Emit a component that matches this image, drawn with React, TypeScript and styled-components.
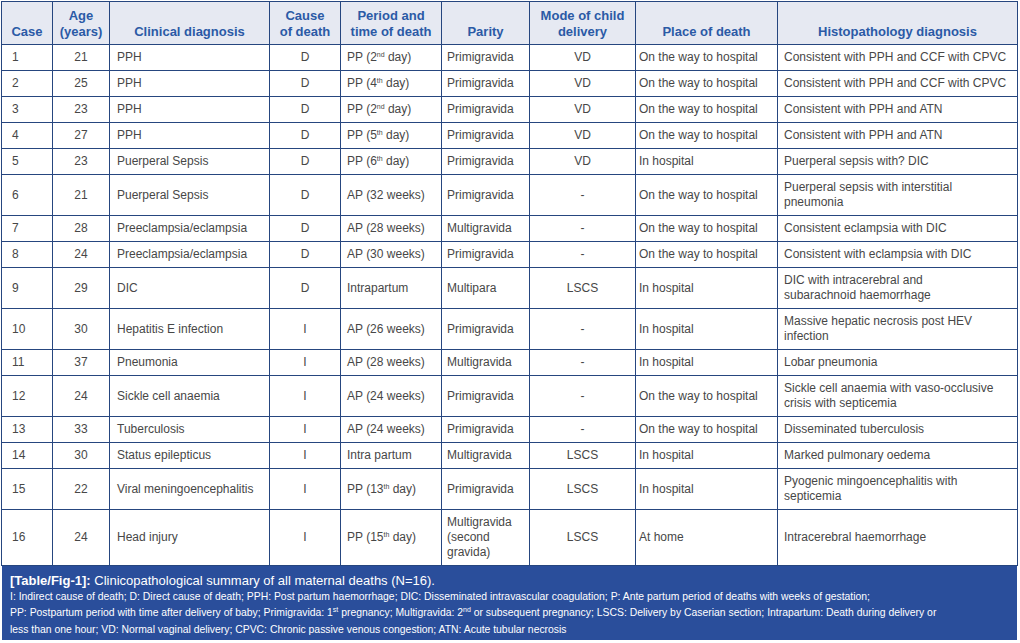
import React from 'react';
import styled, { createGlobalStyle } from 'styled-components';

const Global = createGlobalStyle`
  html, body { margin: 0; padding: 0; background: #fff; }
  body { font-family: "Liberation Sans", Arial, sans-serif; }
`;

type Align = 'left' | 'center';

interface Row {
  c: React.ReactNode[];
}

const Ord = ({ n, s }: { n: string; s: string }) => (
  <>
    {n}
    <Sup>{s}</Sup>
  </>
);

const pp = (n: string, s: string) => (
  <>
    PP (<Ord n={n} s={s} /> day)
  </>
);

const rows: Row[] = [
  { c: ['1', '21', 'PPH', 'D', pp('2', 'nd'), 'Primigravida', 'VD', 'On the way to hospital', 'Consistent with PPH and CCF with CPVC'] },
  { c: ['2', '25', 'PPH', 'D', pp('4', 'th'), 'Primigravida', 'VD', 'On the way to hospital', 'Consistent with PPH and CCF with CPVC'] },
  { c: ['3', '23', 'PPH', 'D', pp('2', 'nd'), 'Primigravida', 'VD', 'On the way to hospital', 'Consistent with PPH and ATN'] },
  { c: ['4', '27', 'PPH', 'D', pp('5', 'th'), 'Primigravida', 'VD', 'On the way to hospital', 'Consistent with PPH and ATN'] },
  { c: ['5', '23', 'Puerperal Sepsis', 'D', pp('6', 'th'), 'Primigravida', 'VD', 'In hospital', 'Puerperal sepsis with? DIC'] },
  { c: ['6', '21', 'Puerperal Sepsis', 'D', 'AP (32 weeks)', 'Primigravida', '-', 'On the way to hospital', <>Puerperal sepsis with interstitial<br />pneumonia</>] },
  { c: ['7', '28', 'Preeclampsia/eclampsia', 'D', 'AP (28 weeks)', 'Multigravida', '-', 'On the way to hospital', 'Consistent eclampsia with DIC'] },
  { c: ['8', '24', 'Preeclampsia/eclampsia', 'D', 'AP (30 weeks)', 'Primigravida', '-', 'On the way to hospital', 'Consistent with eclampsia with DIC'] },
  { c: ['9', '29', 'DIC', 'D', 'Intrapartum', 'Multipara', 'LSCS', 'In hospital', <>DIC with intracerebral and<br />subarachnoid haemorrhage</>] },
  { c: ['10', '30', 'Hepatitis E infection', 'I', 'AP (26 weeks)', 'Primigravida', '-', 'In hospital', <>Massive hepatic necrosis post HEV<br />infection</>] },
  { c: ['11', '37', 'Pneumonia', 'I', 'AP (28 weeks)', 'Multigravida', '-', 'In hospital', 'Lobar pneumonia'] },
  { c: ['12', '24', 'Sickle cell anaemia', 'I', 'AP (24 weeks)', 'Primigravida', '-', 'On the way to hospital', <>Sickle cell anaemia with vaso-occlusive<br />crisis with septicemia</>] },
  { c: ['13', '33', 'Tuberculosis', 'I', 'AP (24 weeks)', 'Primigravida', '-', 'On the way to hospital', 'Disseminated tuberculosis'] },
  { c: ['14', '30', 'Status epilepticus', 'I', 'Intra partum', 'Multigravida', 'LSCS', 'In hospital', 'Marked pulmonary oedema'] },
  { c: ['15', '22', 'Viral meningoencephalitis', 'I', pp('13', 'th'), 'Primigravida', 'LSCS', 'In hospital', <>Pyogenic mingoencephalitis with<br />septicemia</>] },
  { c: ['16', '24', 'Head injury', 'I', pp('15', 'th'), <>Multigravida<br />(second<br />gravida)</>, 'LSCS', 'At home', 'Intracerebral haemorrhage'] },
];

const cols: { w: number; align: Align; pad: number }[] = [
  { w: 51, align: 'left', pad: 10 },
  { w: 57, align: 'center', pad: 4 },
  { w: 160, align: 'left', pad: 7 },
  { w: 71, align: 'center', pad: 4 },
  { w: 101, align: 'left', pad: 6 },
  { w: 88, align: 'left', pad: 5 },
  { w: 106, align: 'center', pad: 4 },
  { w: 142, align: 'left', pad: 3 },
  { w: 240, align: 'left', pad: 6 },
];

const heads: React.ReactNode[] = [
  'Case',
  <>Age<br />(years)</>,
  'Clinical diagnosis',
  <>Cause<br />of death</>,
  <>Period and<br />time of death</>,
  'Parity',
  <>Mode of child<br />delivery</>,
  'Place of death',
  'Histopathology diagnosis',
];

export default function App() {
  return (
    <>
      <Global />
      <Page>
        <Table>
          <colgroup>
            {cols.map((c, i) => (
              <col key={i} style={{ width: c.w }} />
            ))}
          </colgroup>
          <thead>
            <tr>
              {heads.map((h, i) => (
                <Th key={i}>{h}</Th>
              ))}
            </tr>
          </thead>
          <tbody>
            {rows.map((r, ri) => (
              <tr key={ri}>
                {r.c.map((v, ci) => (
                  <Td key={ci} $align={cols[ci].align} $pad={cols[ci].pad}>
                    {v}
                  </Td>
                ))}
              </tr>
            ))}
          </tbody>
        </Table>
        <Caption>
          <CapTitle>
            <b>[Table/Fig-1]:</b> Clinicopathological summary of all maternal deaths (N=16).
          </CapTitle>
          <CapNote>
            I: Indirect cause of death; D: Direct cause of death; PPH: Post partum haemorrhage; DIC: Disseminated intravascular coagulation; P: Ante partum period of deaths with weeks of gestation;
            <br />
            PP: Postpartum period with time after delivery of baby; Primigravida: 1<Sup>st</Sup> pregnancy; Multigravida: 2<Sup>nd</Sup> or subsequent pregnancy; LSCS: Delivery by Caserian section; Intrapartum: Death during delivery or
            <br />
            less than one hour; VD: Normal vaginal delivery; CPVC: Chronic passive venous congestion; ATN: Acute tubular necrosis
          </CapNote>
        </Caption>
      </Page>
    </>
  );
}

const Page = styled.div`
  padding: 1px 0 0 1px;
  width: 1016px;
`;

const Table = styled.table`
  width: 1016px;
  table-layout: fixed;
  border-collapse: collapse;
  font-size: 12px;
  line-height: 15px;
`;

const Th = styled.th`
  background: #e6e9f2;
  color: #2b5aa6;
  font-weight: bold;
  font-size: 13px;
  line-height: 16px;
  text-align: center;
  vertical-align: bottom;
  padding: 4px 3px 4px;
  border: 1px solid #26467f;
  height: 34px;
`;

const Td = styled.td<{ $align: Align; $pad: number }>`
  color: #474747;
  text-align: ${(p) => p.$align};
  vertical-align: middle;
  padding: 5px ${(p) => (p.$align === 'center' ? 4 : 2)}px 5px ${(p) => p.$pad}px;
  border: 1px solid #26467f;
  white-space: nowrap;
`;

const Sup = styled.sup`
  font-size: 7px;
  line-height: 0;
  vertical-align: 4px;
`;

const Caption = styled.div`
  background: #2a4e9b;
  color: #fff;
  margin-left: 1px;
  padding: 6px 7px 0 8px;
  height: 68px;
  overflow: hidden;
`;

const CapTitle = styled.div`
  font-size: 13px;
  line-height: 17px;
`;

const CapNote = styled.div`
  font-size: 10.4px;
  line-height: 16.3px;
  white-space: nowrap;
`;
